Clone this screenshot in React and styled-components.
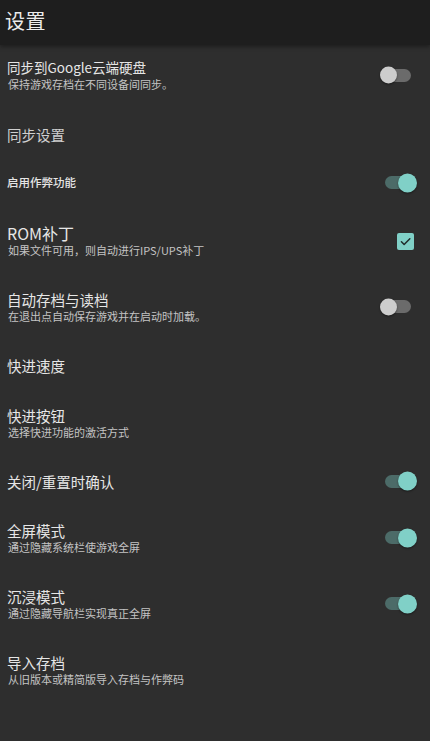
import React from "react";
import styled, { createGlobalStyle } from "styled-components";

const Global = createGlobalStyle`
  html, body { margin: 0; padding: 0; background: #2e2e2e; }
  body { font-family: "Noto Sans CJK SC", "Noto Sans", sans-serif; }
  * { box-sizing: border-box; }
`;

const Screen = styled.div`
  width: 430px;
  height: 741px;
  background: #2e2e2e;
  display: flex;
  flex-direction: column;
  overflow: hidden;
`;

const Header = styled.header`
  height: 45px;
  flex: none;
  background: #1e1e1e;
  display: flex;
  align-items: center;
  padding: 0 5px 4px;
  box-shadow: 0 2px 4px rgba(0, 0, 0, 0.35);
  position: relative;
  z-index: 1;
`;

const HeaderTitle = styled.h1`
  margin: 0;
  font-size: 20px;
  font-weight: 400;
  color: #ececec;
  letter-spacing: 0.5px;
`;

const List = styled.div`
  display: flex;
  flex-direction: column;
`;

const Row = styled.div`
  height: ${(p) => p.$h}px;
  display: flex;
  align-items: center;
  justify-content: space-between;
  padding: 0 17px ${(p) => p.$lift || 0}px 7px;
`;

const Texts = styled.div`
  display: flex;
  flex-direction: column;
  min-width: 0;
`;

const Title = styled.div`
  font-size: ${(p) => p.$size || 14.5}px;
  line-height: 19px;
  color: ${(p) => p.$color || "#e6e6e6"};
  font-weight: ${(p) => p.$weight || 400};
  white-space: nowrap;
`;

const Sub = styled.div`
  font-size: 11px;
  line-height: 15px;
  color: #c4c4c4;
  padding-left: 1px;
  white-space: nowrap;
`;

const Track = styled.div`
  width: 28px;
  height: 13px;
  border-radius: 7px;
  background: ${(p) => (p.$on ? "#4c6b68" : "#6b6b6b")};
  position: relative;
  margin-right: ${(p) => (p.$on ? "0" : "2px")};
`;

const Knob = styled.div`
  position: absolute;
  top: 50%;
  width: ${(p) => (p.$on ? 19 : 17)}px;
  height: ${(p) => (p.$on ? 19 : 17)}px;
  border-radius: 50%;
  transform: translateY(-50%);
  left: ${(p) => (p.$on ? "auto" : "-3px")};
  right: ${(p) => (p.$on ? "-4px" : "auto")};
  background: ${(p) => (p.$on ? "#80d0c7" : "#cdcdcd")};
  box-shadow: 0 1px 2px rgba(0, 0, 0, 0.45);
`;

const Box = styled.div`
  width: 17px;
  height: 17px;
  border-radius: 2px;
  background: #80d0c7;
  display: flex;
  align-items: center;
  justify-content: center;
  margin-right: -1px;
`;

const Toggle = ({ on }) => (
  <Track $on={on}>
    <Knob $on={on} />
  </Track>
);

const Check = () => (
  <Box>
    <svg width="13" height="13" viewBox="0 0 24 24">
      <path d="M4.5 12.5l5 5L20 7" fill="none" stroke="#1f2b2a" strokeWidth="2.8" strokeLinecap="round" strokeLinejoin="round" />
    </svg>
  </Box>
);

const rows = [
  { h: 65, lift: 5, title: "同步到Google云端硬盘", size: 13.5, sub: "保持游戏存档在不同设备间同步。", ctl: "off" },
  { h: 50, lift: 2, title: "同步设置", color: "#cfcfcf", size: 14.5 },
  { h: 47, lift: 2, title: "启用作弊功能", size: 11.5, weight: 500, ctl: "on" },
  { h: 68, title: "ROM补丁", size: 16, sub: "如果文件可用，则自动进行IPS/UPS补丁", ctl: "check" },
  { h: 65, lift: 2, title: "自动存档与读档", sub: "在退出点自动保存游戏并在启动时加载。", ctl: "off" },
  { h: 52, lift: 2, title: "快进速度" },
  { h: 64, lift: 2, title: "快进按钮", sub: "选择快进功能的激活方式" },
  { h: 50, title: "关闭/重置时确认", ctl: "on" },
  { h: 65, lift: 2, title: "全屏模式", sub: "通过隐藏系统栏使游戏全屏", ctl: "on" },
  { h: 67, lift: 2, title: "沉浸模式", sub: "通过隐藏导航栏实现真正全屏", ctl: "on" },
  { h: 66, lift: 2, title: "导入存档", sub: "从旧版本或精简版导入存档与作弊码" },
];

export default function App() {
  return (
    <Screen>
      <Global />
      <Header>
        <HeaderTitle>设置</HeaderTitle>
      </Header>
      <List>
        {rows.map((r) => (
          <Row key={r.title} $h={r.h} $lift={r.lift}>
            <Texts>
              <Title $size={r.size} $color={r.color} $weight={r.weight}>
                {r.title}
              </Title>
              {r.sub && <Sub>{r.sub}</Sub>}
            </Texts>
            {r.ctl === "on" && <Toggle on />}
            {r.ctl === "off" && <Toggle on={false} />}
            {r.ctl === "check" && <Check />}
          </Row>
        ))}
      </List>
    </Screen>
  );
}
